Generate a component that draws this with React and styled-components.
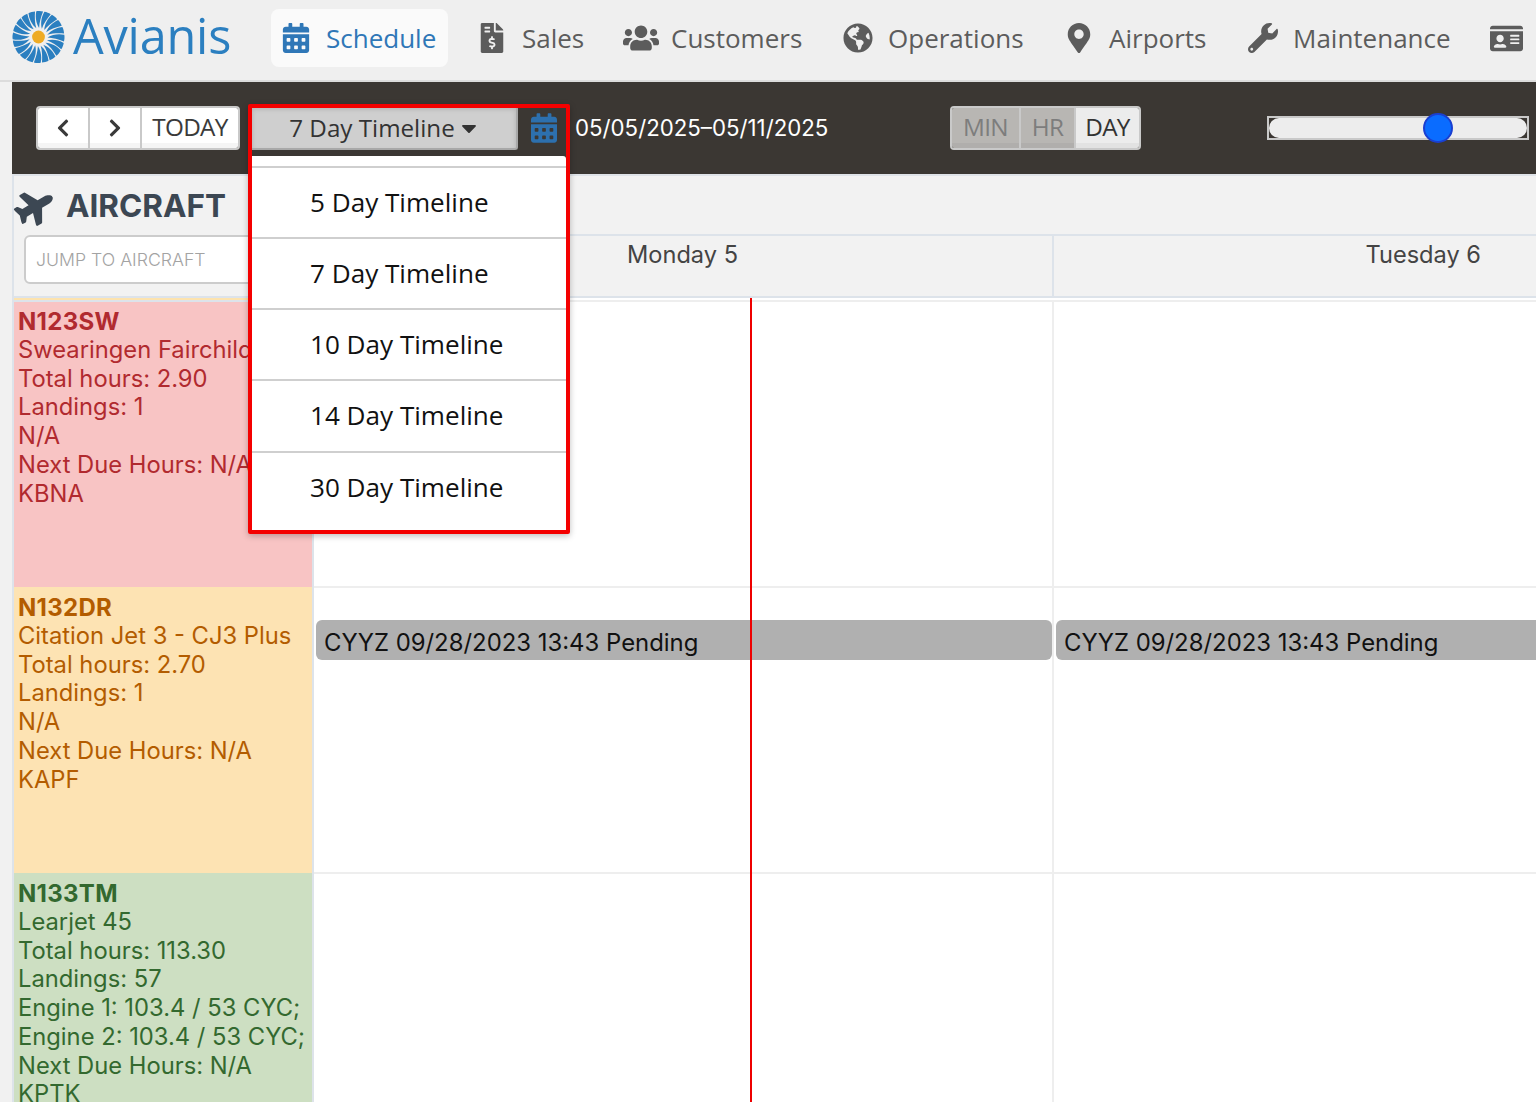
import React from "react";
import styled, { createGlobalStyle } from "styled-components";
import { FaCalendarAlt, FaFileInvoiceDollar, FaUsers, FaGlobeAmericas, FaMapMarkerAlt, FaWrench, FaIdCard, FaPlane, FaChevronLeft, FaChevronRight, FaCaretDown } from "react-icons/fa";

const Global = createGlobalStyle`
  html, body { margin: 0; padding: 0; height: 1102px; overflow: hidden; background: #f1f1f1; }
  * { box-sizing: border-box; }
  body { font-family: Inter, "Liberation Sans", sans-serif; }
`;
const Page = styled.div`width: 1536px; height: 1102px; overflow: hidden; position: relative;`;
const Header = styled.header`
  height: 82px; background: #efefef; border-bottom: 2px solid #dcdcdc;
  display: flex; align-items: flex-start; padding-left: 12px; overflow: hidden;
`;
const Brand = styled.div`
  display: flex; align-items: center; gap: 8px; width: 259px; height: 74px; flex: none;
`;
const BrandName = styled.span`
  font: 400 48.6px/1 "Open Sans", sans-serif; color: #2b7fc0; letter-spacing: -0.2px; margin-top: -3px;
`;
const Nav = styled.nav`display: flex; align-items: center; margin-top: 9px; height: 58px;`;
const NavItem = styled.a`
  display: flex; align-items: center; height: 58px; flex: none;
  width: ${p => p.$w}px; padding-left: ${p => p.$pl}px; gap: ${p => p.$gap}px;
  border-radius: 8px; background: ${p => p.$active ? "#fafafa" : "transparent"};
  color: ${p => p.$active ? "#2f77b7" : "#5c5c5c"};
  font: 400 26px/1 "Open Sans", sans-serif;
  svg { flex: none; }
`;
const Main = styled.main`padding-left: 12px;`;
const Toolbar = styled.div`
  height: 92px; background: #3b3733; display: flex; align-items: center;
  padding: 0 0 0 24px; position: relative;
`;
const BtnGroup = styled.div`
  display: flex; height: 44px; border: 2px solid #c9c9c9; border-radius: 4px; overflow: hidden; flex: none;
`;
const Btn = styled.div`
  width: ${p => p.$w}px; display: flex; align-items: center; justify-content: center; padding-bottom: 1px;
  background: ${p => p.$bg || "#fff"}; color: ${p => p.$fg || "#3a3a3a"};
  box-shadow: inset 0 -5px 0 rgba(0,0,0,.04);
  border-right: ${p => p.$last ? "none" : "2px solid #c9c9c9"};
  font: 400 24.3px/1 "Open Sans", sans-serif; letter-spacing: -0.7px;
`;
const DropToggle = styled.div`
  width: 266px; height: 44px; flex: none; margin-left: 12px;
  background: #cfcfcf; border-right: 2px solid #a8a8a8; border-bottom: 2px solid #a8a8a8;
  border-radius: 0 3px 3px 0; box-shadow: inset 0 3px 5px rgba(0,0,0,.14);
  display: flex; align-items: center; justify-content: center; gap: 2px; padding: 2px 0 0 2px;
  color: #333; font: 400 24.2px/1 "Open Sans", sans-serif;
`;
const CalIcon = styled.span`
  margin-left: 13px; width: 26px; color: #2d70ae; display: flex; flex: none;
`;
const DateRange = styled.span`
  margin-left: 18px; color: #fff; font: 400 22.25px/1 Inter, sans-serif; width: 375px; flex: none; white-space: nowrap;
`;
const Slider = styled.div`
  margin-left: 126px; width: 262px; height: 24px; border: 2px solid #c9c9c9; flex: none; position: relative;
  background: #3b3733;
`;
const Track = styled.div`height: 20px; background: #ededed; border-radius: 10px;`;
const Thumb = styled.div`
  position: absolute; left: 154px; top: -5px; width: 30px; height: 30px; border-radius: 50%;
  background: #0a6cff; border: 2px solid #1a3fd0;
`;
const Menu = styled.div`
  position: absolute; left: 248px; top: 104px; width: 322px; height: 430px; z-index: 5;
  border: 4px solid #f40000; border-radius: 2px; pointer-events: none;
  display: flex; flex-direction: column;
  box-shadow: 0 2px 6px rgba(0,0,0,.25);
`;
const MenuTop = styled.div`height: 48px; flex: none;`;
const MenuBody = styled.div`
  flex: 1; background: #fff; border-radius: 0 3px 0 0; padding-top: 10px;
  display: flex; flex-direction: column;
`;
const MenuItem = styled.div`
  height: ${p => p.$h || 71}px; flex: none; display: flex; align-items: center; padding: 0 0 1px 58px;
  border-top: 2px solid #cfcfcf; color: #111; font: 400 26.1px/1 "Open Sans", sans-serif;
`;
const Body = styled.div`display: flex; position: relative; height: 928px; overflow: hidden; border-top: 2px solid #dfe3e8;`;
const Sidebar = styled.aside`
  width: 302px; flex: none; border-left: 2px solid #dde3ea; border-right: 2px solid #dde3ea;
`;
const SideHead = styled.div`height: 122px; padding-top: 12px; background: #f2f2f2; border-bottom: 2px solid #dde3ea;`;
const SideDivider = styled.div`height: 4px; border-top: 2px solid #fde3ae; border-bottom: 2px solid #dde3ea; background: #f2f2f2;`;
const SideTitle = styled.div`
  display: flex; align-items: center; gap: 12px; color: #3c4753; height: 36px;
  font: 700 31.5px/1 Inter, sans-serif; padding-left: 1px;
`;
const Plane = styled.span`
  display: flex; transform: rotate(-30deg); width: 39px; height: 39px; align-items: center; justify-content: center; flex: none;
  svg { flex: none; }
`;
const Jump = styled.div`
  margin: 11px 0 0 10px; width: 300px; height: 49px; background: #fff; border: 2px solid #ccc; border-radius: 6px;
  display: flex; align-items: center; padding-left: 10px; color: #a3a3a3; font: 300 17.7px/1 Inter, sans-serif;
`;
const Card = styled.div`
  height: ${p => p.$h}px; background: ${p => p.$bg}; color: ${p => p.$fg};
  padding: ${p => p.$pt}px 0 0 4px; overflow: hidden;
  font: 400 23.75px/28.75px Inter, sans-serif; white-space: nowrap;
`;
const Tail = styled.div`font-weight: 700; font-size: 24px; line-height: 26.75px; letter-spacing: .3px; color: ${p => p.$fg};`;
const Timeline = styled.div`flex: 1; min-width: 0; display: flex; flex-direction: column;`;
const TopGap = styled.div`height: 58px; background: #f2f2f2; flex: none;`;
const DayRow = styled.div`
  height: 64px; flex: none; display: flex; background: #f2f2f2; border-top: 2px solid #dde3ea; border-bottom: 2px solid #dde3ea;
`;
const DayHead = styled.div`
  width: 740px; flex: none; border-right: 2px solid #dde3ea; color: #444; padding-top: 5px;
  font: 400 23.6px/28px Inter, sans-serif; text-align: right; padding-right: ${p => p.$pr}px;
`;
const RowDivider = styled.div`height: 4px; flex: none; background: #fff; border-bottom: 2px solid #eee;`;
const Row = styled.div`
  height: 286px; flex: none; background: #fff; display: flex; border-bottom: 2px solid #eee;
`;
const Cell = styled.div`
  width: 740px; flex: none; border-right: 2px solid #eee; padding: 32px 0 0 2px; overflow: hidden;
`;
const Event = styled.div`
  height: 40px; background: #b0b0b0; border-radius: ${p => p.$open ? "6px 0 0 6px" : "6px"};
  color: #111; padding: 5px 0 0 8px; display: flex; align-items: center;
  font: 400 23.9px/1 Inter, sans-serif; white-space: nowrap;
`;
const NowLine = styled.div`position: absolute; left: 738px; top: 122px; bottom: 0; width: 2px; background: #ee0000; z-index: 2;`;

const Logo = () => {
  const blades = Array.from({ length: 20 }, (_, i) => i * 18);
  return (
    <svg width="53" height="52" viewBox="-26.5 -26 53 52">
      {blades.map(a => (
        <path key={a} transform={`rotate(${a})`} d="M0.6 -9 C-2.6 -14 -3.4 -20 -2.2 -25.8 C0.2 -26.2 2.4 -26 4.6 -25.4 C2.4 -20 0.8 -14.5 0.6 -9Z" fill="#2b7fc0" />
      ))}
      <circle r="6.4" fill="#eeab24" />
    </svg>
  );
};

const items = [
  ["Schedule", FaCalendarAlt, 177, 10, 15, true, 30],
  ["Sales", FaFileInvoiceDollar, 150, 29, 15, false, 30],
  ["Customers", FaUsers, 221, 25, 12, false, 36],
  ["Operations", FaGlobeAmericas, 224, 24, 15, false, 30],
  ["Airports", FaMapMarkerAlt, 181, 21, 15, false, 30],
  ["Maintenance", FaWrench, 245, 24, 15, false, 30],
  ["", FaIdCard, 60, 21, 0, false, 33],
];
const timelines = ["5 Day Timeline", "7 Day Timeline", "10 Day Timeline", "14 Day Timeline", "30 Day Timeline"];
const aircraft = [
  { h: 285, pt: 7, bg: "#f8c4c4", fg: "#b12a2f", lines: ["N123SW", "Swearingen Fairchild", "Total hours: 2.90", "Landings: 1", "N/A", "Next Due Hours: N/A", "KBNA"] },
  { h: 286, pt: 8, bg: "#fde3b3", fg: "#b35c00", lines: ["N132DR", "Citation Jet 3 - CJ3 Plus", "Total hours: 2.70", "Landings: 1", "N/A", "Next Due Hours: N/A", "KAPF"] },
  { h: 286, pt: 8, bg: "#cddfc2", fg: "#33692f", lines: ["N133TM", "Learjet 45", "Total hours: 113.30", "Landings: 57", "Engine 1: 103.4 / 53 CYC;", "Engine 2: 103.4 / 53 CYC;", "Next Due Hours: N/A", "KPTK"] },
];

export default function App() {
  return (
    <Page>
      <Global />
      <Header>
        <Brand><Logo /><BrandName>Avianis</BrandName></Brand>
        <Nav>
          {items.map(([label, Icon, w, pl, gap, active, size]) => (
            <NavItem key={w} $w={w} $pl={pl} $gap={gap} $active={active}>
              <Icon size={size} />{label}
            </NavItem>
          ))}
        </Nav>
      </Header>
      <Main>
        <Toolbar>
          <BtnGroup>
            <Btn $w={52}><FaChevronLeft size={20} /></Btn>
            <Btn $w={52}><FaChevronRight size={20} /></Btn>
            <Btn $w={96} $last>TODAY</Btn>
          </BtnGroup>
          <DropToggle>7 Day Timeline <FaCaretDown size={24} /></DropToggle>
          <CalIcon><FaCalendarAlt size={30} /></CalIcon>
          <DateRange>05/05/2025–05/11/2025</DateRange>
          <BtnGroup>
            <Btn $w={69} $bg="#b8b6b3" $fg="#7d7d7d">MIN</Btn>
            <Btn $w={55} $bg="#b8b6b3" $fg="#7d7d7d">HR</Btn>
            <Btn $w={63} $bg="#ececec" $fg="#333" $last>DAY</Btn>
          </BtnGroup>
          <Slider><Track /><Thumb /></Slider>
        </Toolbar>
        <Body>
          <Sidebar>
            <SideHead>
              <SideTitle><Plane><FaPlane size={40} /></Plane>AIRCRAFT</SideTitle>
              <Jump>JUMP TO AIRCRAFT</Jump>
            </SideHead>
            <SideDivider />
            {aircraft.map(a => (
              <Card key={a.lines[0]} $h={a.h} $pt={a.pt} $bg={a.bg} $fg={a.fg}>
                <Tail $fg={a.fg}>{a.lines[0]}</Tail>
                {a.lines.slice(1).map(l => <div key={l}>{l}</div>)}
              </Card>
            ))}
          </Sidebar>
          <Timeline>
            <TopGap />
            <DayRow>
              <DayHead $pr={314}>Monday 5</DayHead>
              <DayHead $pr={311}>Tuesday 6</DayHead>
            </DayRow>
            <RowDivider />
            <Row><Cell /><Cell /></Row>
            <Row>
              <Cell><Event>CYYZ 09/28/2023 13:43 Pending</Event></Cell>
              <Cell><Event $open>CYYZ 09/28/2023 13:43 Pending</Event></Cell>
            </Row>
            <Row><Cell /><Cell /></Row>
          </Timeline>
          <NowLine />
        </Body>
      </Main>
      <Menu>
        <MenuTop />
        <MenuBody>
          {timelines.map((t, i) => <MenuItem key={t} $h={i === 3 ? 72 : 71}>{t}</MenuItem>)}
        </MenuBody>
      </Menu>
    </Page>
  );
}
